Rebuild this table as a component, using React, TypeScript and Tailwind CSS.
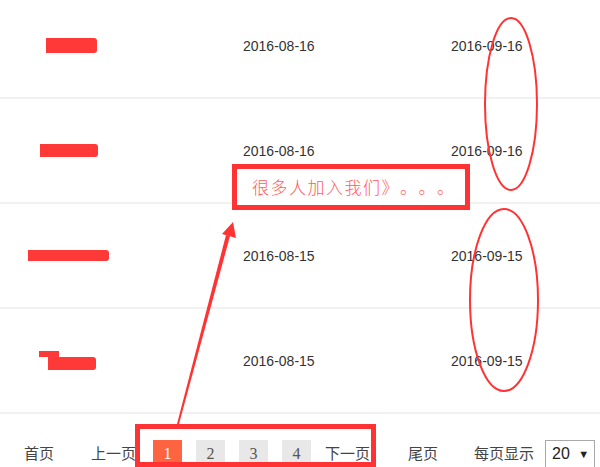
const rows = [
  { start: '2016-08-16', end: '2016-09-16', mark: 'ml-[46px] w-[51px] h-[15px]', tail: '' },
  { start: '2016-08-16', end: '2016-09-16', mark: 'ml-[40px] w-[58px] h-[13px]', tail: '' },
  { start: '2016-08-15', end: '2016-09-15', mark: 'ml-[28px] w-[81px] h-[11px]', tail: '' },
  { start: '2016-08-15', end: '2016-09-15', mark: 'ml-[48px] w-[48px] h-[13px] mt-[6px]', tail: 'left-[39px]' },
]

const pages = ['1', '2', '3', '4']

export default function App() {
  return (
    <div className="relative w-[600px] h-[467px] overflow-hidden bg-white font-['Liberation_Sans','Noto_Sans_CJK_SC',sans-serif]">
      {/* table */}
      <div className="-mt-[6px]">
        {rows.map((r, i) => (
          <div
            key={i}
            className="grid grid-cols-[243px_208px_1fr] items-center h-[105px] border-b-2 border-[#f1f1f1] text-[14px] text-[#333]"
          >
            <div className="relative flex items-center">
              {r.tail && <span className="absolute left-[39px] top-0 w-[20px] h-[6px] bg-[#ff3838]" />}
              <span className={`block bg-[#ff3838] rounded-r-[3px] ${r.mark}`} />
            </div>
            <div className="pt-[2px]">{r.start}</div>
            <div className="pt-[2px]">{r.end}</div>
          </div>
        ))}
      </div>

      {/* pagination */}
      <div className="flex items-center pt-[26px] text-[15px] text-[#444] font-['Liberation_Serif','Noto_Sans_CJK_SC',serif]">
        <span className="ml-[24px]">首页</span>
        <span className="ml-[37px]">上一页</span>
        <div className="ml-[17px] flex gap-[14px]">
          {pages.map((p) => (
            <span
              key={p}
              className={
                p === '1'
                  ? 'w-[29px] h-[28px] flex items-center justify-center bg-[#ff6440] text-white text-[16px]'
                  : 'w-[29px] h-[28px] flex items-center justify-center bg-[#e8e8e8] text-[#555] text-[16px]'
              }
            >
              {p}
            </span>
          ))}
        </div>
        <span className="ml-[14px]">下一页</span>
        <span className="ml-[38px]">尾页</span>
        <span className="ml-[36px]">每页显示</span>
        <div className="ml-[11px] w-[50px] h-[28px] border border-[#a9a9a9] flex items-center justify-between pl-[6px] pr-[5px] font-['Liberation_Sans',sans-serif] text-[16px] text-[#222]">
          <span>20</span>
          <span className="text-[11px]">▼</span>
        </div>
      </div>

      {/* annotation: note box */}
      <div className="absolute left-[232px] top-[164px] w-[238px] h-[46px] bg-white border-[5px] border-[#ff3333] flex items-center pl-[15px] text-[17px] tracking-[1.5px] text-[#ff5c5c] font-['Noto_Sans_CJK_SC',sans-serif] font-light [text-spacing-trim:space-all]">
        很多人加入我们》。。。
      </div>

      {/* annotation: circles, arrow, frame */}
      <svg className="absolute inset-0 pointer-events-none" width="600" height="467" viewBox="0 0 600 467">
        <ellipse cx="511" cy="104" rx="26" ry="86" fill="none" stroke="#ff3333" strokeWidth="2" />
        <ellipse cx="504" cy="300" rx="34" ry="91" fill="none" stroke="#ff3333" strokeWidth="2" />
        <polygon points="177,424 179,424 230,236 226,235" fill="#ff3333" />
        <polygon points="233,222 222,234 236,238" fill="#ff3333" />
        <rect x="137.5" y="426.5" width="236" height="38" fill="none" stroke="#ff3333" strokeWidth="5" />
      </svg>
    </div>
  )
}
